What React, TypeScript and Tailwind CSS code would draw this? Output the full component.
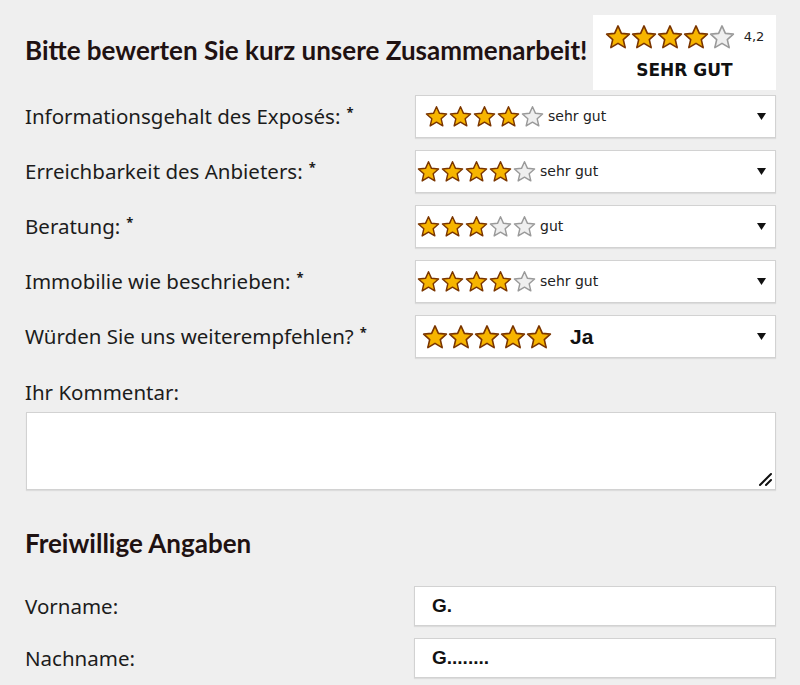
import React from "react";

const FILLED = "#f7b500";
const FILLED_STROKE = "#7a3500";
const EMPTY = "#efefef";
const EMPTY_STROKE = "#9a9a9a";

function Star({ filled, size }: { filled: boolean; size: number }) {
  return (
    <svg width={size} height={size} viewBox="0 0 24 24" className="shrink-0">
      <path
        d="M12 1.8l3.1 6.9 7.4.7-5.6 5 1.7 7.4L12 17.9l-6.6 3.9 1.7-7.4-5.6-5 7.4-.7z"
        fill={filled ? FILLED : EMPTY}
        stroke={filled ? FILLED_STROKE : EMPTY_STROKE}
        strokeWidth={1.5}
        strokeLinejoin="round"
      />
    </svg>
  );
}

function Stars({ count, size, gap }: { count: number; size: number; gap: string }) {
  return (
    <div className={`flex items-center ${gap}`}>
      {[0, 1, 2, 3, 4].map((i) => (
        <Star key={i} filled={i < count} size={size} />
      ))}
    </div>
  );
}

function Arrow() {
  return (
    <svg width="9" height="9" viewBox="0 0 10 10" className="shrink-0">
      <path d="M0 1h10L5 9z" fill="#111" />
    </svg>
  );
}

type Row = { label: string; stars: number; text: string; big?: boolean; pad: string };

const rows: Row[] = [
  { label: "Informationsgehalt des Exposés:", stars: 4, text: "sehr gut", pad: "pl-[9px]" },
  { label: "Erreichbarkeit des Anbieters:", stars: 4, text: "sehr gut", pad: "pl-[1px]" },
  { label: "Beratung:", stars: 3, text: "gut", pad: "pl-[1px]" },
  { label: "Immobilie wie beschrieben:", stars: 4, text: "sehr gut", pad: "pl-[1px]" },
  { label: "Würden Sie uns weiterempfehlen?", stars: 5, text: "Ja", big: true, pad: "pl-[6px]" },
];

const labelCls = "text-[20.5px] text-[#1c1c1c] font-['Noto_Sans',sans-serif]";

function RatingRow({ row }: { row: Row }) {
  return (
    <div className="flex items-center h-[43px]">
      <div className={`w-[390px] ${labelCls}`}>
        {row.label}
        <span className="relative top-[-7px] text-[13px] font-bold ml-[6px]">*</span>
      </div>
      <div
        className={`flex-1 h-full flex items-center bg-white border border-[#d2d2d2] shadow-[0_1px_1px_rgba(0,0,0,0.08)] ${row.pad} pr-[9px]`}
      >
        {row.big ? (
          <>
            <Stars count={row.stars} size={26} gap="gap-[0px]" />
            <span className="ml-[18px] text-[21px] font-bold text-[#111] font-['Liberation_Sans',Arial,sans-serif]">
              {row.text}
            </span>
          </>
        ) : (
          <>
            <Stars count={row.stars} size={23} gap="gap-[1px]" />
            <span className="ml-[4px] text-[14px] text-[#222] font-['DejaVu_Sans',Verdana,sans-serif]">
              {row.text}
            </span>
          </>
        )}
        <div className="flex-1" />
        <Arrow />
      </div>
    </div>
  );
}

function TextRow({ label, value }: { label: string; value: string }) {
  return (
    <div className="flex items-center h-[40px]">
      <div className={`w-[389px] ${labelCls}`}>{label}</div>
      <div className="flex-1 h-full flex items-center bg-white border border-[#d2d2d2] shadow-[0_1px_1px_rgba(0,0,0,0.08)] pl-[17px]">
        <span className="text-[19px] font-bold text-[#111] font-['Liberation_Sans',Arial,sans-serif]">{value}</span>
      </div>
    </div>
  );
}

export default function App() {
  return (
    <div className="w-[800px] h-[685px] overflow-hidden bg-[#efefef] font-['Lato','Noto_Sans',sans-serif] pl-[25px] pr-[24px] pt-[15px]">
      {/* Header with overall score */}
      <div className="flex items-center justify-between h-[75px]">
        <h1 className="text-[26px] font-bold text-[#1f1212] mt-[-4px] whitespace-nowrap">
          Bitte bewerten Sie kurz unsere Zusammenarbeit!
        </h1>
        <div className="w-[183px] shrink-0 h-full bg-white flex flex-col items-center pt-[9px]">
          <div className="flex items-center">
            <Stars count={4} size={26} gap="gap-[0px]" />
            <span className="ml-[9px] text-[13px] text-[#222] font-['DejaVu_Sans',Verdana,sans-serif]">4,2</span>
          </div>
          <div className="mt-[8px] text-[17px] font-bold text-[#111] font-['DejaVu_Sans',Verdana,sans-serif]">
            SEHR GUT
          </div>
        </div>
      </div>

      {/* Ratings */}
      <div className="mt-[5px] flex flex-col gap-[12px]">
        {rows.map((r) => (
          <RatingRow key={r.label} row={r} />
        ))}
      </div>

      {/* Comment */}
      <div className={`mt-[21px] leading-[26px] ${labelCls}`}>Ihr Kommentar:</div>
      <div className="relative mt-[7px] ml-[1px]">
        <textarea className="block w-full h-[78px] resize-none bg-white border border-[#d2d2d2] shadow-[0_1px_1px_rgba(0,0,0,0.08)] outline-none" />
        <svg width="16" height="16" viewBox="0 0 16 16" className="absolute right-[3px] bottom-[3px]">
          <path d="M3 14L14 3M9 14l5-5" stroke="#111" strokeWidth="2" strokeLinecap="round" />
        </svg>
      </div>

      {/* Optional */}
      <h2 className="mt-[38px] text-[26px] font-bold text-[#1f1212] leading-[30px]">Freiwillige Angaben</h2>
      <div className="mt-[28px] flex flex-col gap-[12px]">
        <TextRow label="Vorname:" value="G." />
        <TextRow label="Nachname:" value="G........" />
      </div>
    </div>
  );
}
